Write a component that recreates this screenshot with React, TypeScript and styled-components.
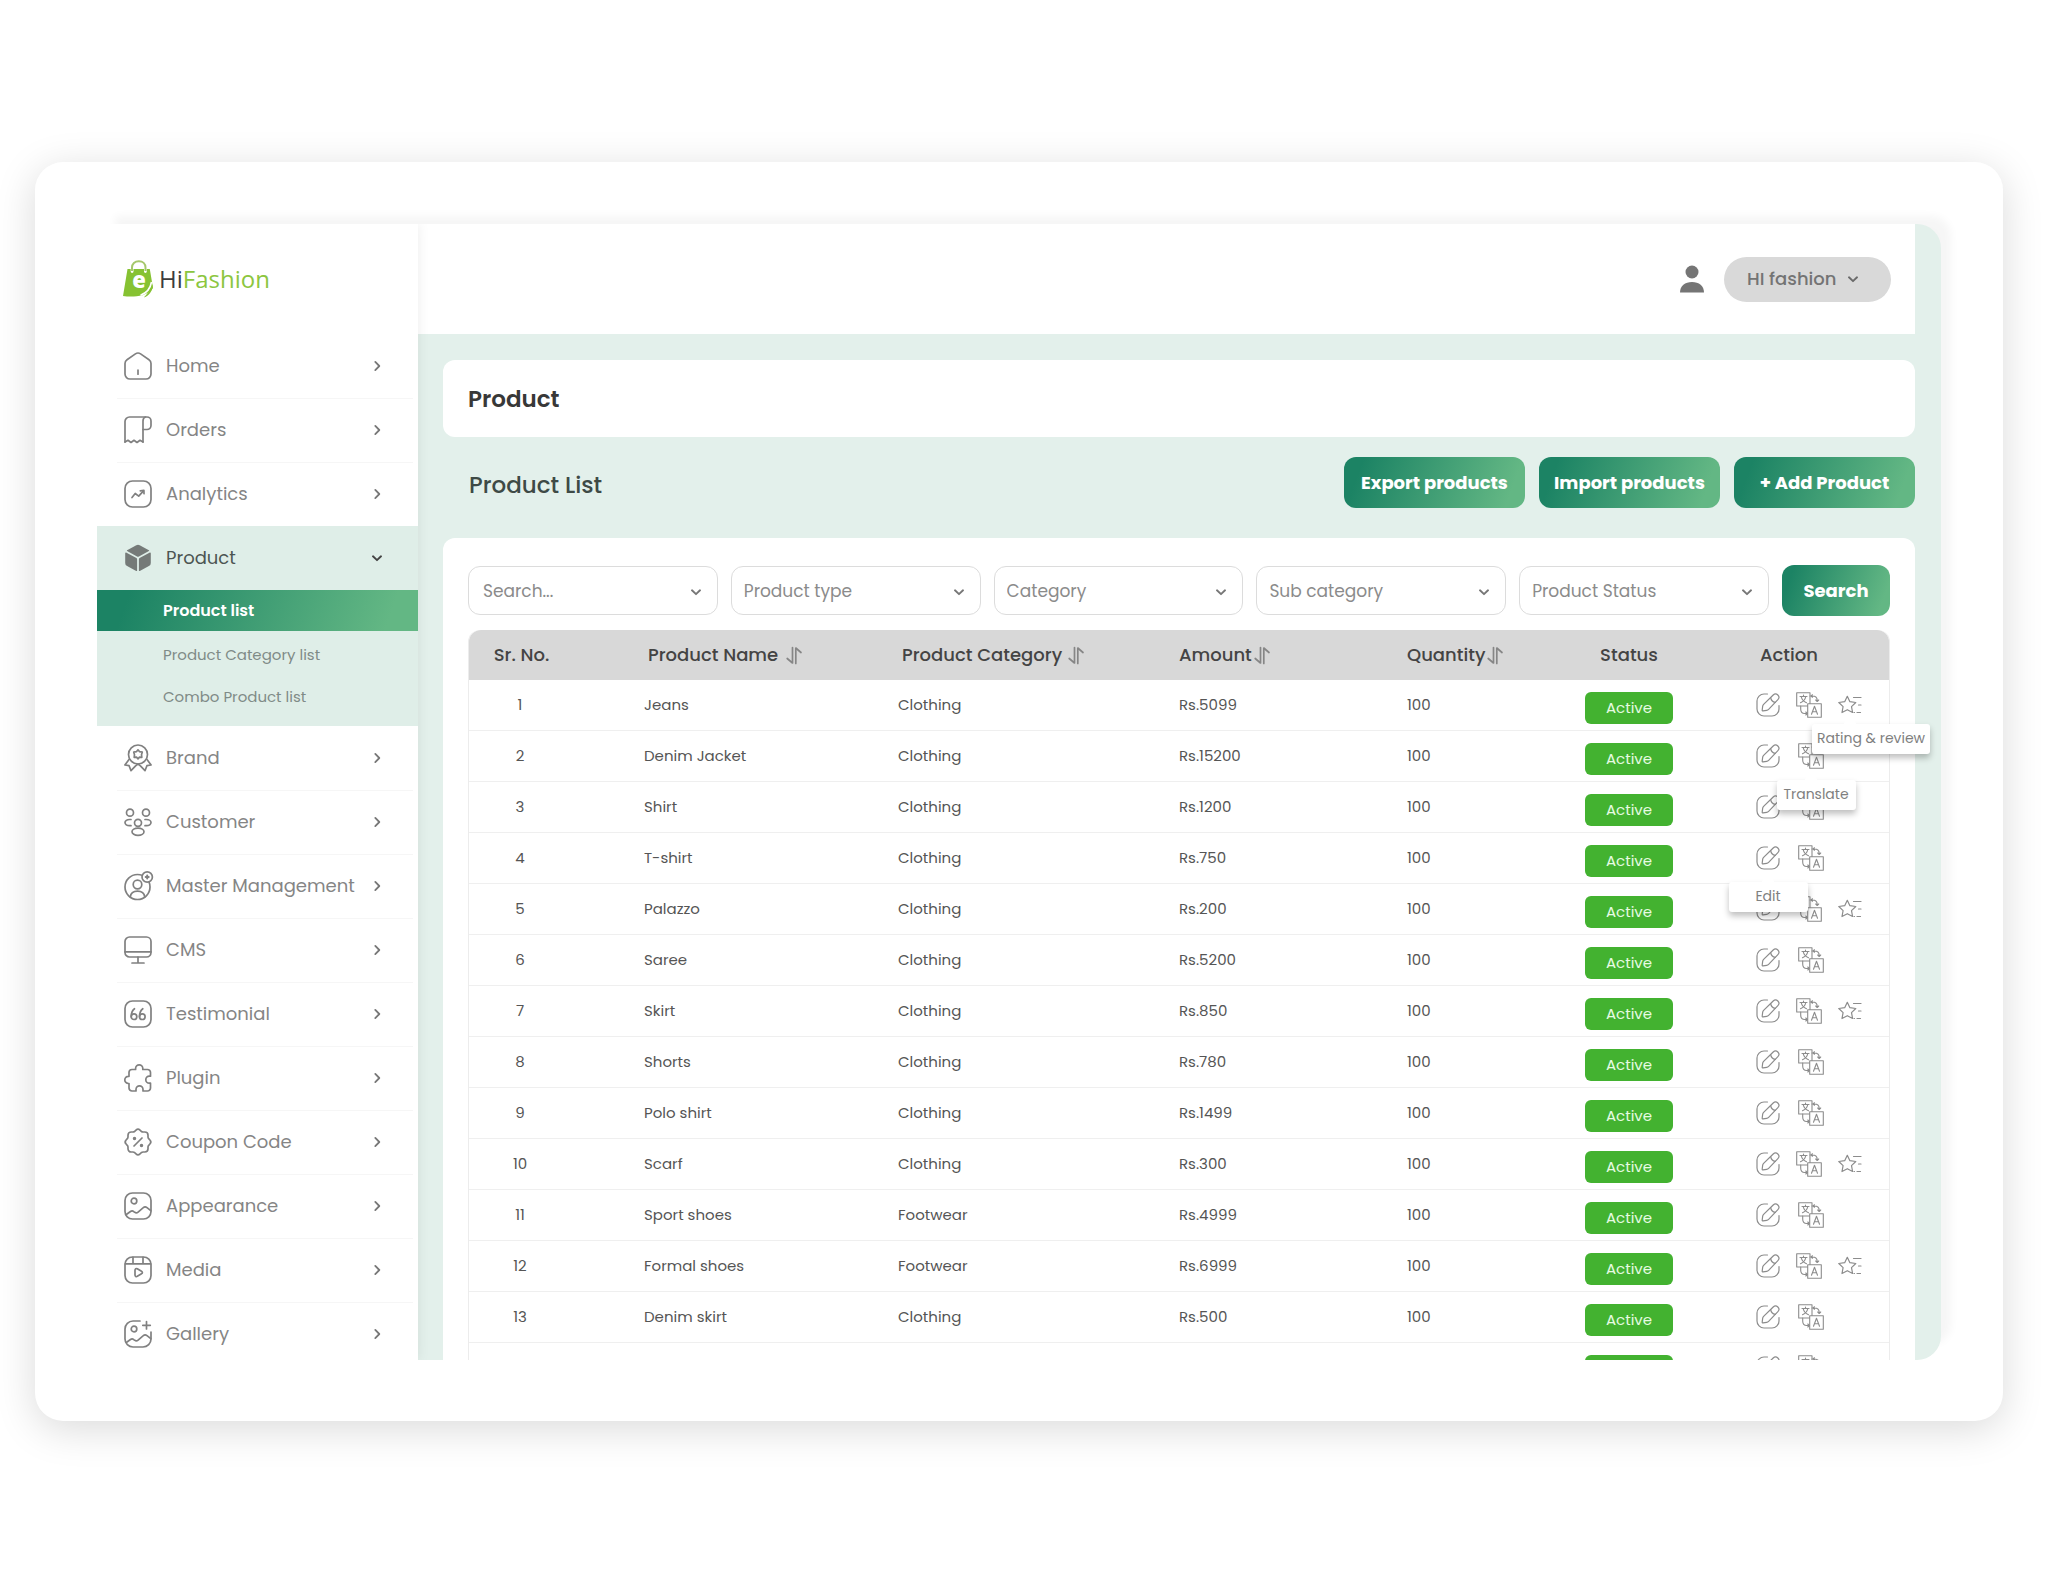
import React from "react";
import styled, { createGlobalStyle, css } from "styled-components";

const font = `"Poppins", "Inter", "Open Sans", sans-serif`;
const green = "linear-gradient(110deg, #1c8364 10%, #63b784 90%)";

const GlobalStyle = createGlobalStyle`
  *, *::before, *::after { box-sizing: border-box; }
  body { margin: 0; background: #fff; font-family: ${font}; color: #3f3f3f; }
  button, input, select { font-family: inherit; }
`;

/* ---------- frame ---------- */

const Page = styled.div`
  display: flex;
  height: 100vh;
  min-height: 900px;
  padding: 162px 45px 173px 35px;
`;

const Frame = styled.div`
  display: flex;
  flex: 1;
  min-width: 0;
  padding: 62px 62px 61px;
  border-radius: 28px;
  background: #fff;
  box-shadow: 0 8px 40px rgba(0, 0, 0, 0.15);
`;

const Shell = styled.div`
  display: flex;
  flex: 1;
  min-width: 0;
  overflow: hidden;
  border-radius: 0 24px 24px 0;
  background: #e3f0eb;
  box-shadow: 14px -12px 8px -4px rgba(0, 0, 0, 0.04);
`;

/* ---------- sidebar ---------- */

const Sidebar = styled.aside`
  position: relative;
  flex: none;
  width: 321px;
  background: #fff;
  box-shadow: 0 0 12px rgba(0, 0, 0, 0.08);
`;

const Brand = styled.a`
  display: flex;
  align-items: center;
  gap: 5px;
  height: 110px;
  padding: 0 26px;
  color: #3c3c3c;
  font-family: "Open Sans", sans-serif;
  font-size: 24px;
  line-height: 32px;
  text-decoration: none;
`;

const BrandAccent = styled.span`
  color: #8cc63f;
`;

const MenuList = styled.ul`
  margin: 0;
  padding: 0;
  list-style: none;
`;

const MenuItem = styled.li<{ $open?: boolean }>`
  position: relative;
  background: ${(p) => (p.$open ? "#dfeee8" : "transparent")};

  & + &::before {
    content: "";
    position: absolute;
    top: 0;
    left: 20px;
    right: 5px;
    height: 1px;
    background: ${(p) => (p.$open ? "transparent" : "#f6f6f6")};
  }
`;

const MenuLink = styled.a<{ $open?: boolean }>`
  display: flex;
  align-items: center;
  gap: 14px;
  height: 64px;
  padding: 0 35px 0 27px;
  color: ${(p) => (p.$open ? "#4c5552" : "#858585")};
  font-size: 18px;
  line-height: 24px;
  text-decoration: none;
`;

const MenuLabel = styled.span`
  flex: 1;
  white-space: nowrap;
`;

const SubList = styled.ul`
  margin: 0;
  padding: 0 0 8px;
  list-style: none;
`;

const SubLink = styled.a<{ $active?: boolean }>`
  display: flex;
  align-items: center;
  height: 42px;
  padding-left: 66px;
  color: #7f8b87;
  font-size: 15px;
  line-height: 20px;
  text-decoration: none;
  ${(p) =>
    p.$active &&
    css`
      height: 41px;
      margin-bottom: 3px;
      background: ${green};
      color: #fff;
      font-size: 16px;
      font-weight: 600;
    `}
`;

/* ---------- main ---------- */

const Main = styled.div`
  display: flex;
  flex: 1;
  flex-direction: column;
  min-width: 0;
  padding-right: 26px;
`;

const TopBar = styled.header`
  display: flex;
  flex: none;
  align-items: center;
  justify-content: flex-end;
  gap: 20px;
  height: 110px;
  padding-right: 24px;
  background: #fff;
`;

const AccountButton = styled.button`
  display: flex;
  align-items: center;
  gap: 10px;
  width: 167px;
  height: 45px;
  padding: 0 23px;
  border: 0;
  border-radius: 23px;
  background: #d9d9d9;
  color: #747474;
  font-size: 18px;
  font-weight: 500;
  line-height: 24px;
  white-space: nowrap;
`;

const Content = styled.main`
  display: flex;
  flex-direction: column;
  padding: 26px 0 0 25px;
`;

const TitleCard = styled.div`
  display: flex;
  align-items: center;
  height: 77px;
  padding: 0 25px;
  border-radius: 12px;
  background: #fff;
`;

const PageTitle = styled.h1`
  margin: 0;
  font-size: 23px;
  font-weight: 600;
  line-height: 32px;
  color: #383838;
`;

const ListBar = styled.div`
  display: flex;
  align-items: center;
  gap: 14px;
  padding: 20px 0 30px 26px;
`;

const ListTitle = styled.h2`
  flex: 1;
  margin: 0;
  padding-top: 4px;
  font-size: 23px;
  font-weight: 500;
  line-height: 32px;
  color: #3e4a46;
`;

const GreenButton = styled.button<{ $width: number }>`
  flex: none;
  width: ${(p) => p.$width}px;
  height: 51px;
  padding: 0;
  border: 0;
  border-radius: 12px;
  background: ${green};
  color: #fff;
  font-size: 18px;
  font-weight: 700;
  line-height: 24px;
  white-space: nowrap;
`;

const Card = styled.section`
  padding: 27px 25px;
  border-radius: 12px 12px 0 0;
  background: #fff;
`;

const Filters = styled.form`
  display: grid;
  grid-template-columns: repeat(5, minmax(0, 1fr)) auto;
  align-items: center;
  gap: 13px;
  margin-bottom: 14px;
`;

const Field = styled.label`
  display: grid;
  align-items: center;

  > * { grid-area: 1 / 1; }
  > svg { justify-self: end; margin: 3px 16px 0 0; pointer-events: none; }
`;

const fieldStyle = css`
  width: 100%;
  height: 49px;
  border: 1px solid #dcdcdc;
  border-radius: 12px;
  outline: 0;
  background: #fff;
  color: #8b8b8b;
  font-size: 17px;
  line-height: 24px;
  appearance: none;
`;

const TextBox = styled.input`
  ${fieldStyle}
  padding: 0 36px 0 14px;
  &::placeholder { color: #8b8b8b; opacity: 1; }
`;

const DropDown = styled.select`
  ${fieldStyle}
  padding: 0 36px 0 12px;
`;

/* ---------- table ---------- */

const Table = styled.table`
  width: 100%;
  table-layout: fixed;
  border-spacing: 0;
  border-left: 1px solid #ececec;
  border-right: 1px solid #ececec;
  border-radius: 12px 12px 0 0;
`;

const HeadCell = styled.th<{ $indent?: number }>`
  height: 50px;
  padding: 0 0 0 ${(p) => p.$indent ?? 0}px;
  background: #d8d8d8;
  color: #444;
  font-size: 18px;
  font-weight: 500;
  line-height: 24px;
  text-align: left;
  white-space: nowrap;

  &:first-child { padding-right: 70px; text-align: center; border-top-left-radius: 12px; }
  &:last-child { border-top-right-radius: 12px; }
`;

const SortButton = styled.button<{ $gap: number }>`
  display: flex;
  align-items: center;
  gap: ${(p) => p.$gap}px;
  padding: 0;
  border: 0;
  background: none;
  color: inherit;
  font: inherit;
`;

const StatusHead = styled.span`
  display: block;
  width: 88px;
  text-align: center;
`;

const Cell = styled.td`
  height: 51px;
  padding: 0;
  border-bottom: 1px solid #efefef;
  color: #555;
  font-size: 15px;
  line-height: 20px;
  white-space: nowrap;

  &:first-child { padding-right: 73px; text-align: center; }
`;

const StatusCell = styled(Cell)`
  padding-top: 6px;
`;

const Badge = styled.span`
  display: flex;
  align-items: center;
  justify-content: center;
  width: 88px;
  height: 32px;
  border-radius: 6px;
  background: #43b230;
  color: #e6fbe2;
  font-size: 15px;
  line-height: 20px;
`;

const Actions = styled.div<{ $gap: number }>`
  display: flex;
  align-items: center;
  gap: ${(p) => p.$gap}px;
`;

const ActionSlot = styled.div`
  position: relative;
  display: flex;
`;

const IconButton = styled.button`
  display: flex;
  align-items: center;
  height: 26px;
  padding: 0;
  border: 0;
  background: none;
`;

const Tip = styled.span<{ $width: number; $shift: number; $drop: number }>`
  position: absolute;
  z-index: 2;
  top: calc(100% + ${(p) => p.$drop}px);
  left: calc(50% - ${(p) => p.$width / 2 - p.$shift}px);
  width: ${(p) => p.$width}px;
  padding: 4px 0 6px;
  border-radius: 3px;
  background: #fff;
  box-shadow: 0 4px 6px rgba(0, 0, 0, 0.25);
  color: #808080;
  font-size: 14px;
  line-height: 20px;
  text-align: center;

  &::before {
    content: "";
    position: absolute;
    top: -5px;
    left: calc(50% - ${(p) => p.$shift + 5}px);
    width: 10px;
    height: 10px;
    border-radius: 2px;
    background: #fff;
    transform: rotate(45deg);
  }
`;

/* ---------- icons ---------- */

const Svg = ({
  size = 28,
  width,
  stroke = "#808080",
  line = 1.7,
  box = 28,
  children,
}: {
  size?: number;
  width?: number;
  stroke?: string;
  line?: number;
  box?: number;
  children: React.ReactNode;
}) => (
  <svg
    width={width ?? size}
    height={size}
    viewBox={`0 0 ${width ?? box} ${box}`}
    fill="none"
    stroke={stroke}
    strokeWidth={line}
    strokeLinecap="round"
    strokeLinejoin="round"
    overflow="visible"
    aria-hidden="true"
  >
    {children}
  </svg>
);

const frame = <rect x="1" y="1" width="26" height="26" rx="7.5" />;

const icons: Record<string, React.ReactNode> = {
  Home: (
    <Svg>
      <path d="M1 11.6c0-1.6.7-2.9 2-3.8l8.4-5.9c1.6-1.1 3.6-1.1 5.2 0L25 7.8c1.3.9 2 2.2 2 3.8V22a5 5 0 0 1-5 5H6a5 5 0 0 1-5-5z" />
      <path d="M14 18v4.2" />
    </Svg>
  ),
  Orders: (
    <Svg>
      <path d="M1 26V5.5A4.5 4.5 0 0 1 5.500 1H23a4 4 0 0 1 4 4v4.500a4 4 0 0 1-4 4h-4" />
      <path d="M19 26V5c0-2 .9-3.500 2.500-4" />
      <path d="M1 26l3-1.700 3 2.200 3-2.200 3 2.200 3-2.200 3 1.700" />
    </Svg>
  ),
  Analytics: (
    <Svg>
      {frame}
      <path d="M8 17.500l3.200-4 3.500 2.700 4.600-5" />
      <path d="M16.300 10.800l3.600-.5.1 3.400" />
    </Svg>
  ),
  Product: (
    <Svg stroke="none">
      <g fill="#757a78">
        <path d="M12.300 1.300a3.500 3.500 0 0 1 3.400 0l9.200 4.900c.4.200.4.700 0 .9L14.500 12.700a1 1 0 0 1-1 0L3.100 7.100c-.4-.2-.4-.7 0-.9z" />
        <path d="M1.200 9.200c0-.5.500-.8.900-.6l10.300 5.500c.4.200.7.600.7 1.100v11.200c0 .5-.5.8-.9.600l-9.100-4.900a3.600 3.600 0 0 1-1.900-3.200z" />
        <path d="M26.800 9.200c0-.5-.5-.8-.9-.6l-10.300 5.500c-.4.200-.7.600-.7 1.100v11.200c0 .5.500.8.900.600l9.100-4.900a3.600 3.600 0 0 0 1.900-3.200z" />
      </g>
    </Svg>
  ),
  Brand: (
    <Svg>
      <circle cx="14" cy="10.500" r="9.500" />
      <path d="M14 5.800l1.600 1.900 2.700.4-.8 2.600.3 2.700-2.300-.2L14 14.800l-1.500-1.600-2.300.2.300-2.700-.8-2.600 2.700-.4z" />
      <path d="M5.200 15.200L.9 21l4.200.7 1.900 5 4.600-4.800 2.400-1.900 2.400 1.900 4.600 4.800 1.900-5 4.200-.7-4.300-5.800" />
    </Svg>
  ),
  Customer: (
    <Svg>
      <circle cx="6" cy="4.700" r="3.500" />
      <circle cx="22" cy="4.700" r="3.500" />
      <circle cx="14" cy="14.800" r="3.500" />
      <ellipse cx="14" cy="23.800" rx="6" ry="3.600" />
      <path d="M7 11.500H5.500C3 11.500 1 12.800 1 14.500s2 3.200 4.500 3.200H7" />
      <path d="M21 11.500h1.500c2.500 0 4.500 1.300 4.500 3s-2 3.200-4.500 3.200H21" />
    </Svg>
  ),
  "Master Management": (
    <Svg>
      <circle cx="13.500" cy="15" r="12.500" />
      <circle cx="13.500" cy="12.500" r="4.300" />
      <path d="M6.300 25c.4-3.600 3.400-5.800 7.200-5.800s6.800 2.200 7.200 5.800" />
      <circle cx="23.200" cy="5" r="5.200" fill="#fff" />
      <path d="M21.700 5h3M23.200 3.500v3" strokeWidth="2" />
    </Svg>
  ),
  CMS: (
    <Svg>
      <rect x="1" y="1" width="26" height="20" rx="4.500" />
      <path d="M1 15.800h26M14 21v6M8 27h12" />
    </Svg>
  ),
  Testimonial: (
    <Svg>
      {frame}
      <circle cx="10" cy="16.700" r="2.800" />
      <circle cx="18.300" cy="16.700" r="2.800" />
      <path d="M7.200 16.700c0-3.500 1-6.300 3.300-8M15.500 16.700c0-3.500 1-6.300 3.300-8" />
    </Svg>
  ),
  Plugin: (
    <Svg>
      <path d="M5 12.300V8.500a3 3 0 0 1 3-3h3.600v-1a3.600 3.600 0 0 1 7.200 0v1h4.700a3 3 0 0 1 3 3v3.700h-1.200a3.500 3.500 0 0 0 0 7h1.200V24a3 3 0 0 1-3 3H19v-1.600a3.500 3.500 0 0 0-7 0V27H8a3 3 0 0 1-3-3v-4.500h-.6a3.600 3.600 0 0 1 0-7.200z" />
    </Svg>
  ),
  "Coupon Code": (
    <Svg>
      <path d="M12 2.100a2.900 2.900 0 0 1 4 0l1.300 1.200c.5.500 1.200.7 1.900.7h1.600A3.200 3.200 0 0 1 24 7.200v1.600c0 .7.200 1.400.7 1.900l1.200 1.300a2.900 2.900 0 0 1 0 4l-1.200 1.300c-.5.500-.7 1.200-.7 1.900v1.600a3.200 3.200 0 0 1-3.200 3.200h-1.600c-.7 0-1.400.2-1.900.7L16 25.900a2.900 2.900 0 0 1-4 0l-1.300-1.200c-.5-.5-1.200-.7-1.900-.7H7.200A3.200 3.200 0 0 1 4 20.800v-1.600c0-.7-.2-1.400-.7-1.900L2.100 16a2.900 2.900 0 0 1 0-4l1.200-1.300c.5-.5.7-1.200.7-1.900V7.200A3.200 3.200 0 0 1 7.200 4h1.600c.7 0 1.400-.2 1.900-.7z" />
      <path d="M10 18l8-8" />
      <circle cx="10.500" cy="10.500" r=".9" fill="#808080" />
      <circle cx="17.500" cy="17.500" r=".9" fill="#808080" />
    </Svg>
  ),
  Appearance: (
    <Svg>
      {frame}
      <circle cx="10" cy="9" r="2.800" />
      <path d="M2.300 22.500l4.200-3c1-.7 2.300-.7 3.300.1l.8.600c1 .8 2.500.8 3.500-.1l5.200-4.400c1-.9 2.600-.9 3.700 0l3.800 3" />
    </Svg>
  ),
  Media: (
    <Svg>
      {frame}
      <path d="M1.300 7.800h25.400M9 1.300v6.300M19 1.300v6.300" />
      <path d="M11 14.200c0-1.500 1.200-2 2.300-1.400l4.200 2.500c1.200.7 1.200 1.900 0 2.500l-4.200 2.500c-1.100.6-2.300.1-2.300-1.300z" />
    </Svg>
  ),
  Gallery: (
    <Svg>
      <path d="M16 1H9a8 8 0 0 0-8 8v10a8 8 0 0 0 8 8h10a8 8 0 0 0 8-8v-7" />
      <circle cx="10" cy="9" r="2.800" />
      <path d="M2.300 22.500l4.200-3c1-.7 2.300-.7 3.300.1l.8.600c1 .8 2.500.8 3.500-.1l5.200-4.400c1-.9 2.600-.9 3.700 0l3.800 3" />
      <path d="M22.500 1.500v7.500M18.800 5.300h7.500" />
    </Svg>
  ),
};

const ChevronRight = () => (
  <Svg size={12} box={14} stroke="#777" line={2.1}>
    <path d="M5 2.300L9.700 7 5 11.700" />
  </Svg>
);

const ChevronDown = ({ color = "#777" }: { color?: string }) => (
  <Svg size={12} box={14} stroke={color} line={2.2}>
    <path d="M2.300 5L7 9.500 11.700 5" />
  </Svg>
);

const LogoMark = () => (
  <svg width="31" height="38" viewBox="0 0 31 38" aria-hidden="true">
    <path d="M9 11V7.500C9 3.800 11.800 1.200 15.800 1.200s6.700 2.600 6.700 6.300V11" fill="none" stroke="#a5c76b" strokeWidth="2" />
    <path d="M4.500 9h3.200v2.500a1.400 1.400 0 0 0 2.800 0V9H21v2.500a1.400 1.400 0 0 0 2.800 0V9h3l3.200 19c-1.500 3-6 5.500-10.500 7.300C13 36.800 6 36.800 0 36z" fill="#86c232" />
    <path d="M28.500 22c-1 6-5 11-11 13.300" fill="none" stroke="#fff" strokeWidth="1.600" />
    <path d="M29.800 24c.2 6-3 11.500-9 13.600 3-3.600 6.500-7 9-13.600z" fill="#86c232" />
    <text x="16" y="28" textAnchor="middle" fontFamily="Open Sans, sans-serif" fontWeight="800" fontSize="22" fill="#fff">
      e
    </text>
  </svg>
);

const UserIcon = () => (
  <svg width="24" height="28" viewBox="0 0 24 28" fill="#757575" aria-hidden="true">
    <circle cx="12" cy="7" r="6.500" />
    <path d="M0 27.500C0 21 5 17 12 17s12 4 12 10.500z" />
  </svg>
);

const SortIcon = () => (
  <Svg width={16} size={18} box={18} stroke="#868686" line={1.7}>
    <path d="M6.500 1.500v15.500L1.200 12.500M9.800 17.500V2L15 6.500" />
  </Svg>
);

const EditIcon = () => (
  <Svg size={24} box={24} stroke="#8c8c8c" line={1.2}>
    <path d="M11.500 1H8a7 7 0 0 0-7 7v8a7 7 0 0 0 7 7h8a7 7 0 0 0 7-7v-3.500" />
    <path d="M17.200 2a3.200 3.200 0 0 1 4.700 4.600l-9.300 9.700c-.5.500-1.200.9-1.900 1l-3.600.6c-.6.100-1-.3-.9-.9l.5-3.800c.1-.7.400-1.300.9-1.800z" />
    <path d="M14.700 4.600c.3 2.500 2 4.300 4.600 4.700" />
  </Svg>
);

const TranslateIcon = () => (
  <Svg size={26} box={26} stroke="#8c8c8c" line={1.1}>
    <path d="M11.500 14H.700V.700H14V11.500" />
    <path d="M11.700 11.700H25.300V25.300H11.700z" />
    <path d="M4 4.500h7M7.500 3v1.500M9.800 4.500c-.5 2.700-2.500 5-5.300 6.200M5.200 4.500c.5 2.700 2.500 5 5.300 6.200" />
    <path d="M15.500 22.300l3-8 3 8M16.500 19.800h4" />
    <path d="M14 4h2.500c3 0 4.700 1.500 4.700 4.500v.8M19.700 8l1.500 1.500L22.700 8M16.500 2.800L15 4l1.500 1.200" />
    <path d="M4.700 14v3c0 3 1.500 4.500 4 4.500h2.500M9.800 20l1.500 1.500L9.800 23" />
  </Svg>
);

const StarIcon = () => (
  <Svg size={24} box={24} stroke="#8c8c8c" line={1.2}>
    <path d="M9.300 3.300l2.600 5.400 5.900.8-4.300 4.100 1.100 5.900-5.300-2.800L4 19.500l1.100-5.900L.8 9.500l5.900-.8z" />
    <path d="M15.500 4.500H23M20.500 12H23M19 19.500h3.500M16 19.500h.5" />
  </Svg>
);

/* ---------- data ---------- */

const menu = [
  "Home", "Orders", "Analytics", "Product", "Brand", "Customer", "Master Management",
  "CMS", "Testimonial", "Plugin", "Coupon Code", "Appearance", "Media", "Gallery",
];
const subMenu = ["Product list", "Product Category list", "Combo Product list"];
const filters = ["Product type", "Category", "Sub category", "Product Status"];
const columnWidths = [175, 254, 281, 228, 178, 171, 133];

type Tips = { edit?: boolean; translate?: boolean; rating?: boolean };
type Product = [name: string, category: string, amount: string, rated: boolean, tips?: Tips];

const products: Product[] = [
  ["Jeans", "Clothing", "Rs.5099", true, { rating: true }],
  ["Denim Jacket", "Clothing", "Rs.15200", false, { translate: true }],
  ["Shirt", "Clothing", "Rs.1200", false],
  ["T-shirt", "Clothing", "Rs.750", false, { edit: true }],
  ["Palazzo", "Clothing", "Rs.200", true],
  ["Saree", "Clothing", "Rs.5200", false],
  ["Skirt", "Clothing", "Rs.850", true],
  ["Shorts", "Clothing", "Rs.780", false],
  ["Polo shirt", "Clothing", "Rs.1499", false],
  ["Scarf", "Clothing", "Rs.300", true],
  ["Sport shoes", "Footwear", "Rs.4999", false],
  ["Formal shoes", "Footwear", "Rs.6999", true],
  ["Denim skirt", "Clothing", "Rs.500", false],
];

const RowActions = ({ rated, tips = {} }: { rated: boolean; tips?: Tips }) => (
  <Actions $gap={rated ? 16 : 18}>
    <ActionSlot>
      <IconButton type="button" aria-label="Edit"><EditIcon /></IconButton>
      {tips.edit && <Tip $width={79} $shift={0} $drop={11}>Edit</Tip>}
    </ActionSlot>
    <ActionSlot>
      <IconButton type="button" aria-label="Translate"><TranslateIcon /></IconButton>
      {tips.translate && <Tip $width={79} $shift={5} $drop={11}>Translate</Tip>}
    </ActionSlot>
    {rated && (
      <ActionSlot>
        <IconButton type="button" aria-label="Rating and review"><StarIcon /></IconButton>
        {tips.rating && <Tip $width={118} $shift={21} $drop={6}>Rating &amp; review</Tip>}
      </ActionSlot>
    )}
  </Actions>
);

const SortHead = ({ label, gap, indent }: { label: string; gap: number; indent?: number }) => (
  <HeadCell scope="col" $indent={indent}>
    <SortButton type="button" $gap={gap}>
      {label}
      <SortIcon />
    </SortButton>
  </HeadCell>
);

export default function App() {
  return (
    <>
      <GlobalStyle />
      <Page>
        <Frame>
          <Shell>
            <Sidebar>
              <Brand href="#home">
                <LogoMark />
                <span>Hi<BrandAccent>Fashion</BrandAccent></span>
              </Brand>
              <nav aria-label="Main menu">
                <MenuList>
                  {menu.map((label) => {
                    const open = label === "Product";
                    return (
                      <MenuItem key={label} $open={open}>
                        <MenuLink href="#menu" $open={open}>
                          {icons[label]}
                          <MenuLabel>{label}</MenuLabel>
                          {open ? <ChevronDown color="#444" /> : <ChevronRight />}
                        </MenuLink>
                        {open && (
                          <SubList>
                            {subMenu.map((item, i) => (
                              <li key={item}>
                                <SubLink href="#sub" $active={i === 0}>{item}</SubLink>
                              </li>
                            ))}
                          </SubList>
                        )}
                      </MenuItem>
                    );
                  })}
                </MenuList>
              </nav>
            </Sidebar>

            <Main>
              <TopBar>
                <UserIcon />
                <AccountButton type="button">
                  HI fashion
                  <ChevronDown color="#6a6a6a" />
                </AccountButton>
              </TopBar>

              <Content>
                <TitleCard>
                  <PageTitle>Product</PageTitle>
                </TitleCard>

                <ListBar>
                  <ListTitle>Product List</ListTitle>
                  <GreenButton type="button" $width={181}>Export products</GreenButton>
                  <GreenButton type="button" $width={181}>Import products</GreenButton>
                  <GreenButton type="button" $width={181}>+ Add Product</GreenButton>
                </ListBar>

                <Card>
                  <Filters>
                    <Field>
                      <TextBox type="text" placeholder="Search..." aria-label="Search" />
                      <ChevronDown />
                    </Field>
                    {filters.map((name) => (
                      <Field key={name}>
                        <DropDown aria-label={name}>
                          <option>{name}</option>
                        </DropDown>
                        <ChevronDown />
                      </Field>
                    ))}
                    <GreenButton type="button" $width={108}>Search</GreenButton>
                  </Filters>

                  <Table>
                    <colgroup>
                      {columnWidths.map((width, i) => (
                        <col key={i} style={{ width }} />
                      ))}
                    </colgroup>
                    <thead>
                      <tr>
                        <HeadCell scope="col">Sr. No.</HeadCell>
                        <SortHead label="Product Name" gap={8} indent={4} />
                        <SortHead label="Product Category" gap={6} indent={4} />
                        <SortHead label="Amount" gap={2} />
                        <SortHead label="Quantity" gap={2} />
                        <HeadCell scope="col"><StatusHead>Status</StatusHead></HeadCell>
                        <HeadCell scope="col" $indent={4}>Action</HeadCell>
                      </tr>
                    </thead>
                    <tbody>
                      {products.map(([name, category, amount, rated, tips], i) => (
                        <tr key={name}>
                          <Cell>{i + 1}</Cell>
                          <Cell>{name}</Cell>
                          <Cell>{category}</Cell>
                          <Cell>{amount}</Cell>
                          <Cell>100</Cell>
                          <StatusCell><Badge>Active</Badge></StatusCell>
                          <Cell><RowActions rated={rated} tips={tips} /></Cell>
                        </tr>
                      ))}
                      <tr>
                        <Cell />
                        <Cell />
                        <Cell />
                        <Cell />
                        <Cell />
                        <StatusCell><Badge /></StatusCell>
                        <Cell><RowActions rated={false} /></Cell>
                      </tr>
                    </tbody>
                  </Table>
                </Card>
              </Content>
            </Main>
          </Shell>
        </Frame>
      </Page>
    </>
  );
}
